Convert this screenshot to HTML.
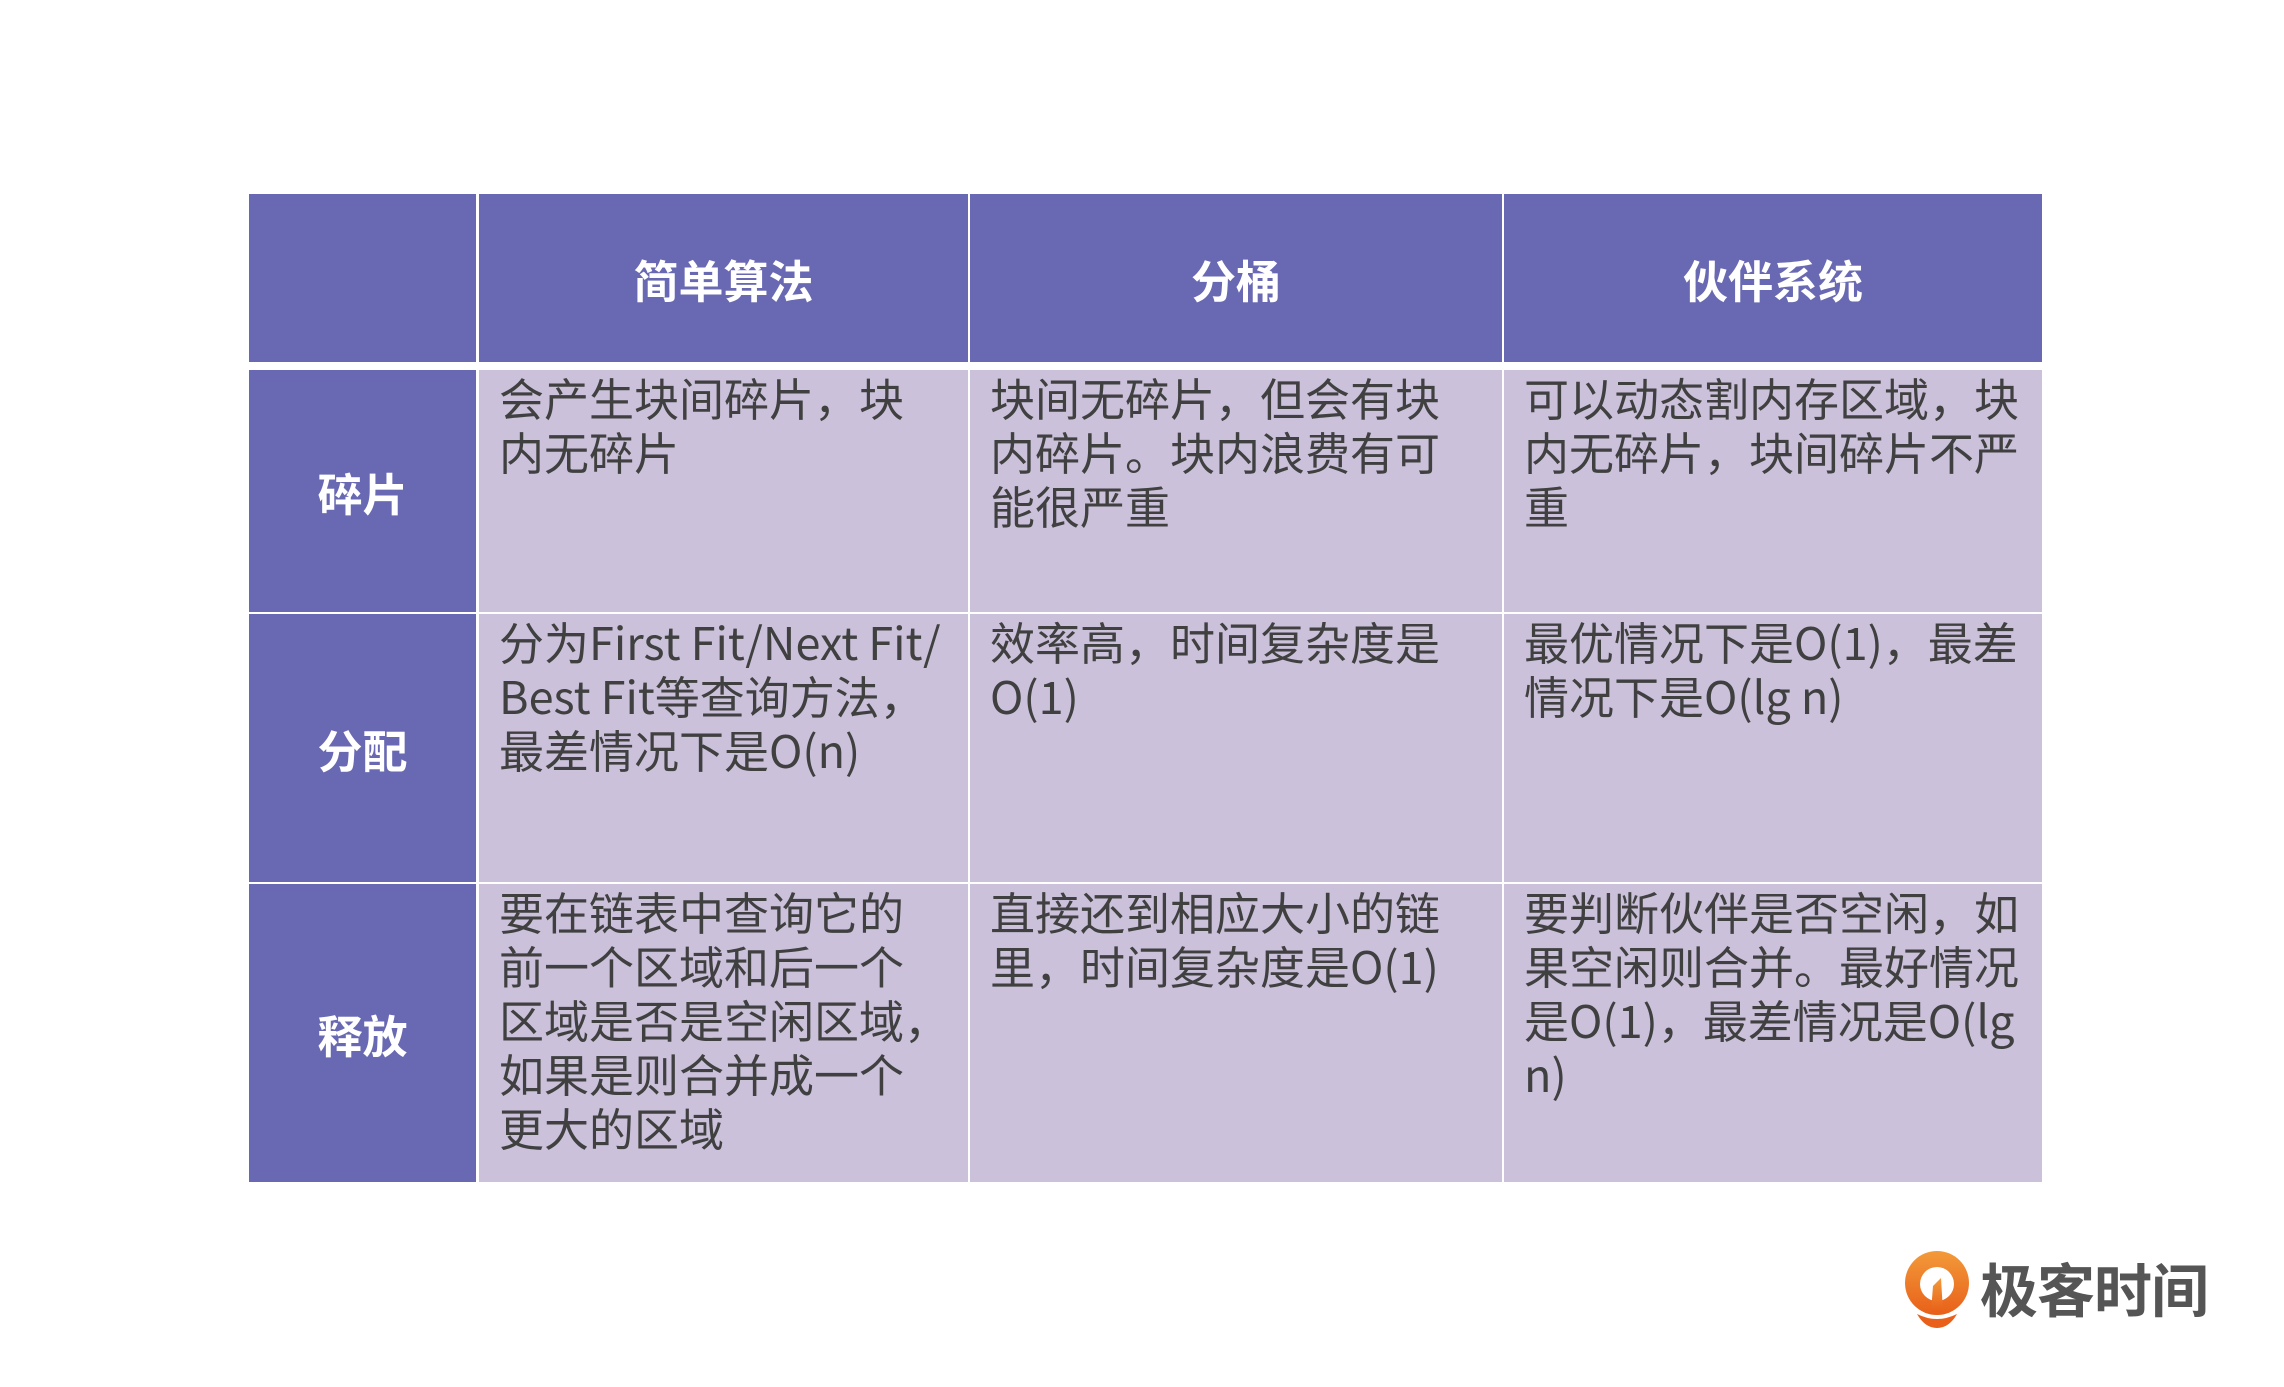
<!DOCTYPE html>
<html><head><meta charset="utf-8"><style>
body{margin:0;width:2284px;height:1387px;background:#fff;position:relative;overflow:hidden;font-family:"Noto Sans CJK SC","Liberation Sans",sans-serif;}
.c{position:absolute;box-sizing:border-box;}
.h{background:#6969b3;color:#fff;font-weight:bold;font-size:45px;display:flex;align-items:center;justify-content:center;}
.b{background:#cbc1db;color:#404040;font-size:45px;line-height:54px;padding:0 0 0 20px;white-space:nowrap;}
</style></head><body>
<div class="c h" style="left:249px;top:194px;width:227px;height:168px"></div>
<div class="c h" style="left:479px;top:194px;width:489px;height:168px">简单算法</div>
<div class="c h" style="left:970px;top:194px;width:532px;height:168px">分桶</div>
<div class="c h" style="left:1504px;top:194px;width:538px;height:168px">伙伴系统</div>

<div class="c h" style="left:249px;top:370px;width:227px;height:242px">碎片</div>
<div class="c b" style="left:479px;top:370px;width:489px;height:242px">会产生块间碎片，块<br>内无碎片</div>
<div class="c b" style="left:970px;top:370px;width:532px;height:242px">块间无碎片，但会有块<br>内碎片。块内浪费有可<br>能很严重</div>
<div class="c b" style="left:1504px;top:370px;width:538px;height:242px">可以动态割内存区域，块<br>内无碎片，块间碎片不严<br>重</div>

<div class="c h" style="left:249px;top:614px;width:227px;height:268px">分配</div>
<div class="c b" style="left:479px;top:614px;width:489px;height:268px">分为First Fit/Next Fit/<br>Best Fit等查询方法，<br>最差情况下是O(n)</div>
<div class="c b" style="left:970px;top:614px;width:532px;height:268px">效率高，时间复杂度是<br>O(1)</div>
<div class="c b" style="left:1504px;top:614px;width:538px;height:268px">最优情况下是O(1)，最差<br>情况下是O(lg n)</div>

<div class="c h" style="left:249px;top:884px;width:227px;height:298px">释放</div>
<div class="c b" style="left:479px;top:884px;width:489px;height:298px">要在链表中查询它的<br>前一个区域和后一个<br>区域是否是空闲区域，<br>如果是则合并成一个<br>更大的区域</div>
<div class="c b" style="left:970px;top:884px;width:532px;height:298px">直接还到相应大小的链<br>里，时间复杂度是O(1)</div>
<div class="c b" style="left:1504px;top:884px;width:538px;height:298px">要判断伙伴是否空闲，如<br>果空闲则合并。最好情况<br>是O(1)，最差情况是O(lg<br>n)</div>

<svg class="c" style="left:1903px;top:1250px" width="70" height="78" viewBox="0 0 70 78">
<defs><linearGradient id="g" x1="0" y1="0" x2="0" y2="1"><stop offset="0" stop-color="#f39a3a"/><stop offset="1" stop-color="#e8601a"/></linearGradient></defs>
<circle cx="34" cy="33" r="32" fill="url(#g)"/>
<circle cx="34" cy="34" r="17" fill="#fff"/>
<path d="M30 36 L38 28 L40 62 L28 62 Z" fill="url(#g)"/>
<path d="M14 64 Q34 74 54 64 Q46 78 34 78 Q22 78 14 64Z" fill="#e8601a"/>
</svg>
<div class="c" style="left:1980px;top:1249px;font-size:58px;font-weight:bold;color:#555;line-height:76px;letter-spacing:-1px">极客时间</div>
</body></html>
